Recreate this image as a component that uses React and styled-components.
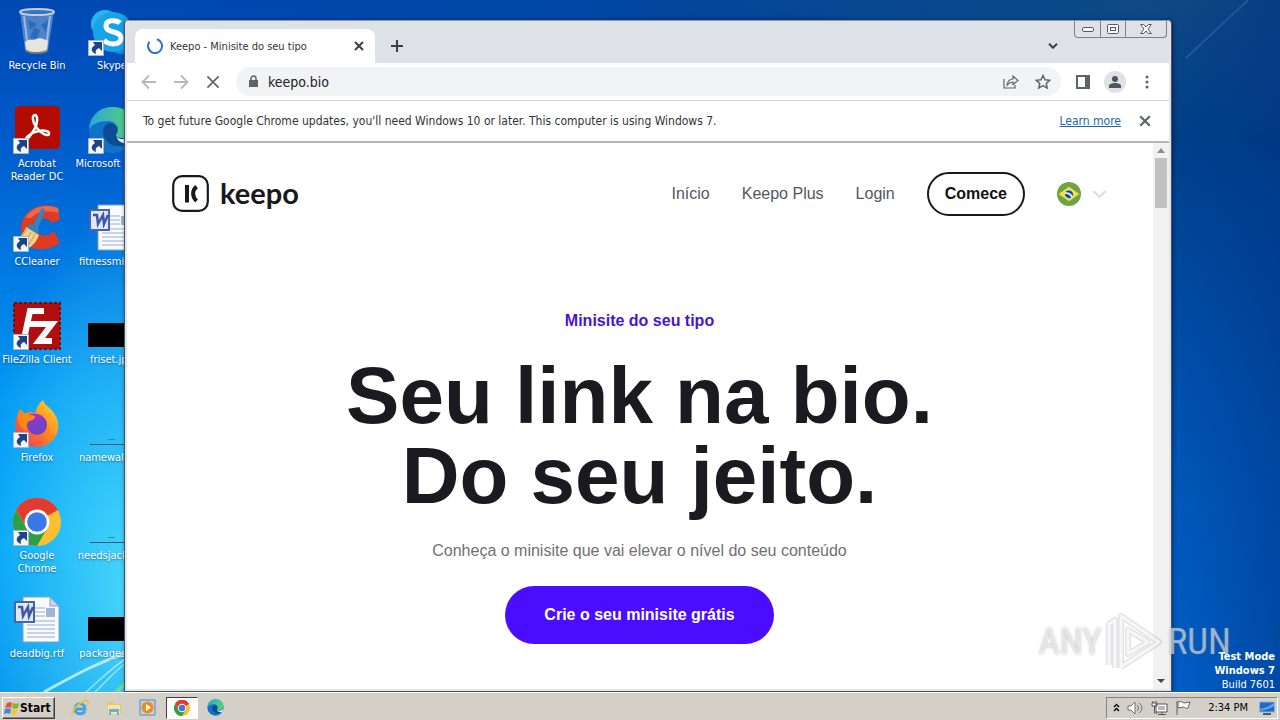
import React from "react";
import styled, { createGlobalStyle, css } from "styled-components";

const ui = `"DejaVu Sans Condensed", "DejaVu Sans", Tahoma, sans-serif`;
const sans = `"Liberation Sans", Arial, sans-serif`;

const GlobalStyle = createGlobalStyle`
  *, *::before, *::after { box-sizing: border-box; }
  body { margin: 0; font-family: ${ui}; font-size: 11px; color: #222; }
  button, input { font: inherit; color: inherit; padding: 0; border: 0; background: none; }
  h1, p, ul { margin: 0; padding: 0; }
  svg { display: block; flex: none; }
`;

const Screen = styled.div`
  display: flex;
  flex-direction: column;
  min-height: 100vh;
`;

const Desktop = styled.main`
  position: relative;
  flex: 1;
  overflow: hidden;
  background:
    radial-gradient(ellipse 160px 380px at 130px 590px, rgba(85, 224, 250, 0.85), rgba(40, 190, 250, 0) 100%),
    linear-gradient(90deg, rgba(0, 64, 140, 0) 10%, rgba(0, 70, 160, 0.9) 50%, rgba(0, 60, 140, 0) 90%),
    linear-gradient(90deg, rgba(0, 56, 140, 0) 90%, rgba(0, 50, 130, 0.5) 100%),
    linear-gradient(180deg, #0048b2 0%, #0058c8 18%, #0078e2 38%, #0098f4 58%, #00a2f8 78%, #0090ee 100%) left / 50% 100% no-repeat,
    linear-gradient(180deg, #0f4a84 0%, #00408a 20%, #004ca4 42%, #005cc0 72%, #0062cc 100%) right / 50% 100% no-repeat;
`;

const Streaks = styled.svg`
  position: absolute;
  bottom: 0;
  left: 0;
`;

const Glint = styled.svg`
  position: absolute;
  top: 0;
  right: 0;
`;

const Shortcuts = styled.ul`
  position: relative;
  display: grid;
  grid-template-columns: 75px 75px;
  grid-auto-rows: 98px;
  width: 150px;
  list-style: none;
`;

const Shortcut = styled.li`
  display: flex;
  flex-direction: column;
  align-items: center;
  gap: 3px;
  width: 74px;
  padding-top: 8px;
  color: #fff;
  line-height: 13px;
  text-align: center;
  text-shadow: 0 1px 2px rgba(0, 20, 60, 0.5);
  white-space: ${(p) => (p.$wrap ? "normal" : "nowrap")};
`;

const Picture = styled.span`
  position: relative;
  width: 48px;
  height: 48px;
`;

const ArrowBadge = styled.svg`
  position: absolute;
  left: 0;
  bottom: 0;
`;

const BrowserWindow = styled.section`
  position: absolute;
  top: 20px;
  right: 108px;
  bottom: 0;
  left: 124px;
  display: flex;
  flex-direction: column;
  padding: 0 2px 2px;
  border: 1px solid #44505c;
  border-top-color: #8e9aa8;
  border-radius: 4px 4px 0 0;
  background: #e3e5e9;
  box-shadow: 1px 0 4px rgba(0, 10, 40, 0.5);
`;

const TitleBar = styled.div`
  display: flex;
  align-items: flex-end;
  height: 42px;
  padding-left: 8px;
  background: #dee1e6;
`;

const Tab = styled.div`
  display: flex;
  align-items: center;
  width: 240px;
  height: 34px;
  margin-right: 5px;
  padding: 0 10px 0 12px;
  gap: 7px;
  border-radius: 8px 8px 0 0;
  background: #fff;
  color: #333;
`;

const TabTitle = styled.span`
  flex: 1;
  white-space: nowrap;
`;

const IconButton = styled.button`
  display: grid;
  place-items: center;
  flex: none;
  width: ${(p) => p.$size || 32}px;
  height: ${(p) => p.$size || 32}px;
  color: ${(p) => p.$tone || "#5f6368"};
`;

const TitleEnd = styled.div`
  display: flex;
  align-items: flex-end;
  align-self: stretch;
  margin-left: auto;
`;

const WindowButtons = styled.div`
  display: flex;
  align-self: flex-start;
  margin: 0 2px 0 4px;
  border: 1px solid #7c828a;
  border-top: 0;
  border-radius: 0 0 4px 4px;
`;

const WindowButton = styled.button`
  display: grid;
  place-items: center;
  width: ${(p) => (p.$wide ? 41 : 25)}px;
  height: 16px;
  & + & { border-left: 1px solid #7c828a; }
`;

const Toolbar = styled.div`
  display: flex;
  align-items: center;
  height: 38px;
  padding: 0 6px;
  border-bottom: 1px solid #d2d3d5;
  background: #fff;
`;

const AddressBar = styled.label`
  display: flex;
  align-items: center;
  flex: 1;
  height: 29px;
  margin: 0 6px 0 7px;
  padding: 0 2px 0 12px;
  border-radius: 15px;
  background: #f1f3f4;
  color: #222;
  font-size: 14px;
  input { flex: 1; min-width: 0; margin-left: 9px; outline: 0; }
`;

const Avatar = styled.span`
  display: grid;
  place-items: center;
  width: 22px;
  height: 22px;
  border-radius: 50%;
  background: #dee1e6;
`;

const InfoBar = styled.div`
  display: flex;
  align-items: center;
  height: 42px;
  padding: 0 8px 0 16px;
  border-bottom: 2px solid #b4b5b7;
  background: #fff;
  color: #333;
  font-size: 12px;
  a { margin-left: auto; margin-right: 8px; color: #1967b8; }
`;

const Viewport = styled.div`
  display: flex;
  flex: 1;
  min-height: 0;
`;

const Page = styled.div`
  flex: 1;
  padding: 29px 46px 0 45px;
  background: #fff;
  font-family: ${sans};
  font-size: 16px;
  line-height: 26px;
`;

const SiteNav = styled.nav`
  display: flex;
  align-items: center;
  gap: 32px;
  height: 44px;
`;

const Brand = styled.a`
  display: flex;
  align-items: center;
  gap: 11px;
  margin-right: auto;
  padding-bottom: 2px;
  color: #18181d;
  font: 700 29px/34px Lato, sans-serif;
  text-decoration: none;
`;

const NavLink = styled.a`
  color: #56565f;
  text-decoration: none;
`;

const Outlined = styled.button`
  height: 44px;
  padding: 0 16px;
  border: 2px solid #18181d;
  border-radius: 22px;
  color: #111;
  font-weight: 700;
`;

const Language = styled.button`
  display: flex;
  align-items: center;
  gap: 11px;
`;

const Hero = styled.div`
  display: flex;
  flex-direction: column;
  align-items: center;
  padding-top: 92px;
  text-align: center;
`;

const Eyebrow = styled.p`
  color: #4515dc;
  font-weight: 700;
`;

const Headline = styled.h1`
  margin: 22px 0;
  color: #1a1a20;
  font-size: 80px;
  line-height: 80px;
`;

const Lead = styled.p`
  color: #707074;
`;

const Primary = styled.button`
  height: 58px;
  margin-top: 22px;
  padding: 0 39px;
  border-radius: 29px;
  background: #4a0dff;
  color: #fff;
  font-weight: 700;
`;

const ScrollTrack = styled.div`
  display: flex;
  flex-direction: column;
  align-items: center;
  width: 16px;
  padding: 5px 0;
  background: #f1f1f1;
`;

const ScrollThumb = styled.div`
  width: 12px;
  height: 50px;
  margin: 5px 0 auto;
  background: #c1c1c1;
`;

const Watermark = styled.div`
  position: absolute;
  right: 49px;
  bottom: 18px;
  display: flex;
  align-items: center;
  gap: 4px;
  color: rgba(255, 255, 255, 0.55);
  font: 400 37px/64px "Liberation Sans Narrow", "Roboto Condensed", sans-serif;
  text-shadow: 0 0 3px rgba(110, 110, 120, 0.5);
  pointer-events: none;
`;

const BuildNote = styled.div`
  position: absolute;
  right: 5px;
  bottom: 0;
  color: #fff;
  line-height: 14px;
  text-align: right;
  strong { display: block; }
`;

const Taskbar = styled.footer`
  display: flex;
  align-items: center;
  height: 28px;
  padding: 2px 2px 0;
  border-top: 1px solid #fff;
  background: #d4d0c8;
  color: #000;
`;

const raised = css`
  border: 1px solid;
  border-color: #fff #404040 #404040 #fff;
  box-shadow: inset -1px -1px #868480;
`;

const StartButton = styled.button`
  ${raised}
  display: flex;
  align-items: center;
  height: 22px;
  margin-right: 9px;
  padding: 0 3px 0 1px;
  font-size: 12px;
  font-weight: 700;
`;

const TaskButton = styled.button`
  display: grid;
  place-items: center;
  width: 32px;
  height: 22px;
  margin-right: 2px;
  border: 1px solid;
  border-color: ${(p) => (p.$active ? "#404040 #fff #fff #404040" : "transparent")};
  background: ${(p) => (p.$active ? "#fff" : "none")};
`;

const Tray = styled.div`
  display: flex;
  align-items: center;
  gap: 7px;
  height: 22px;
  margin-left: auto;
  padding: 0 2px 0 6px;
  border: 1px solid;
  border-color: #868480 #fff #fff #868480;
  time { margin: 0 4px 0 9px; }
`;

/* ---------- drawings ---------- */

const Cross = ({ size = 10, width = 2 }) => (
  <svg width={size} height={size} viewBox="0 0 10 10" stroke="currentColor" strokeWidth={width} fill="none">
    <path d="M1 1l8 8M9 1l-8 8" />
  </svg>
);

const Chevron = ({ width = 10, stroke = "#3c4043", line = 2 }) => (
  <svg width={width} height={width * 0.6} viewBox="0 0 10 6" stroke={stroke} strokeWidth={line} fill="none">
    <path d="M1 .7l4 4 4-4" />
  </svg>
);

const Arrow = ({ flip }) => (
  <svg width="16" height="16" viewBox="0 0 16 16" fill="none" stroke="#b6b8bb" strokeWidth="1.800">
    <path d={flip ? "M1 8h13M8 1.500L14.500 8 8 14.500" : "M15 8H2M8 1.500L1.500 8 8 14.500"} />
  </svg>
);

const ChromeMark = ({ size }) => (
  <svg width={size} height={size} viewBox="0 0 48 48">
    <circle cx="24" cy="24" r="24" fill="#fbc02d" />
    <path d="M24 24L3.2 12A24 24 0 0 1 44.8 12z" fill="#e33b2e" />
    <path d="M24 12h20.8A24 24 0 0 0 3.2 12L14 30z" fill="#e33b2e" />
    <path d="M3.2 12A24 24 0 0 0 24 48l10.4-18L24 34l-10.4-4z" fill="#2f9e48" />
    <circle cx="24" cy="24" r="12.4" fill="#fff" />
    <circle cx="24" cy="24" r="9.8" fill="#3b78e7" />
  </svg>
);

const EdgeMark = ({ size }) => (
  <svg width={size} height={size} viewBox="0 0 48 48">
    <defs>
      <linearGradient id="edgeTop" x1="0" x2="1">
        <stop offset="0" stopColor="#2aa7dd" />
        <stop offset="1" stopColor="#5ad36b" />
      </linearGradient>
    </defs>
    <circle cx="24" cy="24" r="23" fill="#1173c8" />
    <path d="M1 24C2 9 12 1 25 1c14 0 22 10 22 19 0 8-6 12-13 12-5 0-7-2-5-5 3-5-1-12-9-12C10 15 2 19 1 24z" fill="url(#edgeTop)" />
    <path d="M15 27c0-6 3-9 6-10 6 0 10 5 8 10-2 3 0 5 5 5 5 1 9 0 11-2l1 4-8 5c-11 4-22-2-23-12z" fill="#0c4a94" />
    <path d="M29 27c-2 4 1 6 6 6 6 0 10-2 12-6-1 6-3 9-5 11-9 0-15-4-13-11z" fill="#e9f6fb" />
  </svg>
);

const RecycleBin = () => (
  <svg width="48" height="48" viewBox="0 0 48 48">
    <path d="M7 4l5 38c0 5 23 5 23 0l6-38z" fill="#7ea6d8" fillOpacity=".6" />
    <path d="M11 8l4 32M37 8l-4 32" stroke="#dce9f8" strokeOpacity=".55" strokeWidth="2" />
    <path d="M17 30l4-11 6 3-3 9zM28 17l7-5-2 12zM15 12l9 4-7 6z" fill="#225fae" opacity=".7" />
    <path d="M12 34c4-4 8-1 11-3 5-2 8 0 12 2l-1 9c-4 4-17 4-21 0z" fill="#e6e4dc" />
    <path d="M13 42c3 4 18 4 22 0" stroke="#777" strokeWidth="2" fill="none" />
    <ellipse cx="24" cy="4" rx="17" ry="3" fill="#3474bd" stroke="#c3cbd4" strokeWidth="2" />
  </svg>
);

const Skype = () => (
  <svg width="48" height="48" viewBox="0 0 48 48">
    <circle cx="17" cy="16" r="14" fill="#28b4ee" />
    <circle cx="33" cy="33" r="13" fill="#0d8bd8" />
    <circle cx="25" cy="24" r="20" fill="#16a3e8" />
    <path d="M32 15c-3-3-14-4-14 3 0 8 15 4 15 12 0 8-13 7-17 2" stroke="#fff" strokeWidth="5" fill="none" />
  </svg>
);

const Acrobat = () => (
  <svg width="48" height="48" viewBox="0 0 48 48">
    <rect x="2" y="0" width="45" height="43" rx="5" fill="#b30b00" />
    <path d="M12 34c3-6 9-8 14-9s11 0 10 3-9-1-13-7-4-12-1-12 3 9-1 15-7 11-9 10z" fill="none" stroke="#fff" strokeWidth="2.500" />
  </svg>
);

const CCleaner = () => (
  <svg width="48" height="48" viewBox="0 0 48 48">
    <path d="M45 4C28-4 8 7 8 25c0 19 20 27 39 14l-6-12c-5 6-16 7-18-3-1-10 11-13 16-5l8-3z" fill="#dd3b22" />
    <path d="M12 14c8-13 23-14 33-10l1 5c-10-3-20-3-28 5z" fill="#f5876a" opacity=".6" />
    <path d="M29 4l3 1-7 20-6-3z" fill="#2c86c8" />
    <path d="M16 20l10 5-1 6-12-7z" fill="#3b7fb8" />
    <path d="M13 23l13 8c-2 6-6 11-12 14L2 36c5-3 9-7 11-13z" fill="#f1cf8c" />
    <path d="M14 25L5 37M18 28l-8 13M22 30l-8 14" stroke="#c89b50" strokeWidth="1" />
  </svg>
);

const WordDoc = () => (
  <svg width="48" height="48" viewBox="0 0 48 48">
    <path d="M10 1h27l9 9v36H10z" fill="#f8fbff" stroke="#8a9cc0" />
    <path d="M37 1l9 9h-9z" fill="#c9d5ea" stroke="#8a9cc0" />
    <path d="M22 12h10M22 16h10M22 20h10M14 25h28M14 29h28M14 33h28M14 37h28M14 41h28" stroke="#98abd0" />
    <rect x="33" y="12" width="9" height="9" fill="#9db4dc" />
    <rect x="2" y="6" width="19" height="20" fill="#dfe8f8" stroke="#4a62a6" strokeWidth="2" />
    <path d="M5 11h4l1 9 5-9 1 9 4-9" fill="none" stroke="#3d57a3" strokeWidth="2.500" />
  </svg>
);

const FileZilla = () => (
  <svg width="48" height="48" viewBox="0 0 48 48">
    <rect x="1" y="1" width="46" height="46" fill="#b30d0d" stroke="#7d0a0a" strokeWidth="2" strokeDasharray="3 2" />
    <path d="M31 9H17l-6 28M14 22h12M26 22h13L26 39h13" fill="none" stroke="#fff" strokeWidth="6" />
  </svg>
);

const Firefox = () => (
  <svg width="48" height="48" viewBox="0 0 48 48">
    <defs>
      <linearGradient id="fox" x1="1" y1="0" x2="0" y2="1">
        <stop offset="0" stopColor="#ffe13a" />
        <stop offset=".45" stopColor="#ff8b1c" />
        <stop offset="1" stopColor="#f0285f" />
      </linearGradient>
    </defs>
    <path d="M30 0c2 6 7 7 11 13 11 16-1 34-17 34C8 47-2 32 4 16l3-7 5 5c4-3 7-2 10-1 2-6 4-10 8-13z" fill="url(#fox)" />
    <circle cx="24" cy="25" r="10" fill="#7442c9" />
    <path d="M17 14c8-2 15 2 17 9-4-4-6-4-9-3-3 3-8 1-12 3 0-4 0-6 4-9z" fill="#a130c8" />
    <path d="M6 12c5 1 9 2 16 4 1 4-6 4-8 7s1 8 1 8C6 28 4 20 6 12z" fill="#ff8a16" />
  </svg>
);

const BlackThumb = () => (
  <svg width="48" height="48" viewBox="0 0 48 48">
    <rect y="21" width="48" height="24" />
  </svg>
);

const ThinThumb = () => (
  <svg width="48" height="48" viewBox="0 0 48 48">
    <path d="M2 44.500h46" stroke="#1d5f80" />
    <path d="M20 39.500h7" stroke="#2b8cb4" />
  </svg>
);

const WindowsFlag = () => (
  <svg width="16" height="16" viewBox="0 0 16 16">
    <path d="M3 3c2-1 4-1 5 0L7 8C5 7 4 7 1 8z" fill="#e8502e" />
    <path d="M9 3c2 1 4 1 6 0l-1 5c-2 1-4 1-6 0z" fill="#7db928" />
    <path d="M1 9c2-1 4-1 6 0l-1 5c-2-1-4-1-6 0z" fill="#3a8ad8" />
    <path d="M8 9c2 1 4 1 6 0l-2 5c-1 1-3 1-5 0z" fill="#fbc32a" />
  </svg>
);

const shortcuts = [
  { name: "Recycle Bin", art: <RecycleBin /> },
  { name: "Skype", art: <Skype />, badge: true },
  { name: "Acrobat Reader DC", art: <Acrobat />, badge: true, wrap: true },
  { name: "Microsoft Edge", art: <EdgeMark size={48} />, badge: true },
  { name: "CCleaner", art: <CCleaner />, badge: true },
  { name: "fitnessmin.rtf", art: <WordDoc /> },
  { name: "FileZilla Client", art: <FileZilla />, badge: true },
  { name: "friset.jpg", art: <BlackThumb /> },
  { name: "Firefox", art: <Firefox />, badge: true },
  { name: "namewall.jpg", art: <ThinThumb /> },
  { name: "Google Chrome", art: <ChromeMark size={48} />, badge: true, wrap: true },
  { name: "needsjack.jpg", art: <ThinThumb /> },
  { name: "deadbig.rtf", art: <WordDoc /> },
  { name: "packages.jpg", art: <BlackThumb /> },
];

function DesktopIcons() {
  return (
    <Shortcuts>
      {shortcuts.map(({ name, art, badge, wrap }) => (
        <Shortcut key={name} $wrap={wrap}>
          <Picture>
            {art}
            {badge && (
              <ArrowBadge width="16" height="16" viewBox="0 0 16 16">
                <path d="M.5.5h15v15H.5z" fill="#f4f6f8" stroke="#a9b4c0" />
                <path d="M5 2h9v9l-3-3c-3 1-4 3-3 6-5-2-6-6-1-9z" fill="#1c4489" />
              </ArrowBadge>
            )}
          </Picture>
          {name}
        </Shortcut>
      ))}
    </Shortcuts>
  );
}

function BrowserChrome() {
  return (
    <>
      <TitleBar>
        <Tab>
          <svg width="16" height="16" viewBox="0 0 16 16" fill="none" stroke="#2f6fdb" strokeWidth="2">
            <path d="M10 1.300A7 7 0 1 1 2.500 3.700" />
          </svg>
          <TabTitle>Keepo - Minisite do seu tipo</TabTitle>
          <IconButton $size={12} $tone="#3c4043" aria-label="Close tab"><Cross /></IconButton>
        </Tab>
        <IconButton $size={34} $tone="#3c4043" aria-label="New tab">
          <svg width="12" height="12" viewBox="0 0 12 12" stroke="currentColor" strokeWidth="2"><path d="M6 0v12M0 6h12" /></svg>
        </IconButton>
        <TitleEnd>
          <IconButton $size={34} aria-label="Search tabs"><Chevron /></IconButton>
          <WindowButtons>
            <WindowButton aria-label="Minimize">
              <svg width="12" height="5" viewBox="0 0 12 5"><rect x=".5" y=".5" width="11" height="4" rx="1.500" fill="#fff" stroke="#555b66" /></svg>
            </WindowButton>
            <WindowButton aria-label="Maximize">
              <svg width="12" height="10" viewBox="0 0 12 10" fill="#fff" stroke="#555b66"><rect x=".5" y=".5" width="11" height="9" rx="1" /><rect x="3.500" y="3.500" width="5" height="3" /></svg>
            </WindowButton>
            <WindowButton $wide aria-label="Close">
              <svg width="12" height="10" viewBox="0 0 12 10" fill="#fff" stroke="#555b66">
                <path d="M.7.500h3L6 3 8.300.500h3L8 5l3.300 4.500h-3L6 7 3.700 9.500h-3L4 5z" />
              </svg>
            </WindowButton>
          </WindowButtons>
        </TitleEnd>
      </TitleBar>
      <Toolbar>
        <IconButton aria-label="Back"><Arrow /></IconButton>
        <IconButton aria-label="Forward"><Arrow flip /></IconButton>
        <IconButton aria-label="Stop"><Cross size={14} width={1.2} /></IconButton>
        <AddressBar>
          <svg width="11" height="13" viewBox="0 0 11 13">
            <path d="M1 5h9v7H1z" fill="#5f6368" />
            <path d="M3 5V3.500a2.500 2.500 0 0 1 5 0V5" fill="none" stroke="#5f6368" strokeWidth="1.500" />
          </svg>
          <input aria-label="Address" defaultValue="keepo.bio" />
          <IconButton aria-label="Share">
            <svg width="16" height="14" viewBox="0 0 16 14" fill="none" stroke="#5f6368" strokeWidth="1.200">
              <path d="M1 4v9h11v-3M4 10c1-5 3-6 6-6V1l5 4.500-5 4V7c-3 0-4 1-6 3z" />
            </svg>
          </IconButton>
          <IconButton aria-label="Bookmark">
            <svg width="16" height="16" viewBox="0 0 16 16" fill="none" stroke="#5f6368" strokeWidth="1.500">
              <path d="M8 1.500l2 4.300 4.700.5-3.500 3.100 1 4.700L8 11.700l-4.200 2.400 1-4.700L1.300 6.300 6 5.800z" />
            </svg>
          </IconButton>
        </AddressBar>
        <IconButton aria-label="Side panel">
          <svg width="14" height="14" viewBox="0 0 14 14"><path d="M1 1h12v12H1z" fill="#fff" stroke="#5f6368" strokeWidth="2" /><path d="M9 0h5v14H9z" fill="#5f6368" /></svg>
        </IconButton>
        <IconButton aria-label="Profile">
          <Avatar>
            <svg width="14" height="14" viewBox="0 0 14 14" fill="#51555b"><circle cx="7" cy="4" r="3" /><path d="M1 13v-2c0-4 12-4 12 0v2z" /></svg>
          </Avatar>
        </IconButton>
        <IconButton aria-label="Menu">
          <svg width="4" height="14" viewBox="0 0 4 14" fill="#5f6368"><circle cx="2" cy="2" r="1.500" /><circle cx="2" cy="7" r="1.500" /><circle cx="2" cy="12" r="1.500" /></svg>
        </IconButton>
      </Toolbar>
      <InfoBar>
        <span>To get future Google Chrome updates, you'll need Windows 10 or later. This computer is using Windows 7.</span>
        <a href="#learn">Learn more</a>
        <IconButton aria-label="Dismiss"><Cross size={12} width={1.800} /></IconButton>
      </InfoBar>
    </>
  );
}

function KeepoPage() {
  return (
    <Page>
      <SiteNav>
        <Brand href="#home">
          <svg width="37" height="37" viewBox="0 0 37 37">
            <rect x="1.200" y="1.200" width="34.600" height="34.600" rx="9" fill="none" stroke="#18181d" strokeWidth="2.200" />
            <path d="M13 10h4v17.500h-4z" fill="#18181d" />
            <path d="M24.500 11.500c-4.500 4-4.500 10 0 14.500" fill="none" stroke="#18181d" strokeWidth="4" />
          </svg>
          keepo
        </Brand>
        <NavLink href="#inicio">Início</NavLink>
        <NavLink href="#plus">Keepo Plus</NavLink>
        <NavLink href="#login">Login</NavLink>
        <Outlined>Comece</Outlined>
        <Language aria-label="Idioma">
          <svg width="24" height="24" viewBox="0 0 24 24">
            <circle cx="12" cy="12" r="12" fill="#6da544" />
            <path d="M12 4.700L22.400 12 12 19.300 1.600 12z" fill="#ffda44" />
            <circle cx="12" cy="12" r="4.200" fill="#f0f0f0" />
            <path d="M8.200 10.300c3-.5 6 .6 7.400 3.900A4.200 4.200 0 0 0 8.200 10.300zM7.800 12c2.500-.4 5 .5 6.500 3.400A4.200 4.200 0 0 1 7.800 12z" fill="#0052b4" />
          </svg>
          <Chevron width={15} stroke="#dcdce0" line={1.3} />
        </Language>
      </SiteNav>
      <Hero>
        <Eyebrow>Minisite do seu tipo</Eyebrow>
        <Headline>Seu link na bio.<br />Do seu jeito.</Headline>
        <Lead>Conheça o minisite que vai elevar o nível do seu conteúdo</Lead>
        <Primary>Crie o seu minisite grátis</Primary>
      </Hero>
    </Page>
  );
}

export default function App() {
  return (
    <Screen>
      <GlobalStyle />
      <Desktop>
        <Streaks width="190" height="60" viewBox="0 0 190 60" fill="none" stroke="#d8fbff">
          <path d="M44 60C70 46 95 31 130 20" strokeWidth="3" opacity=".75" />
          <path d="M86 60c14-12 26-25 44-36M95 60c11-10 20-22 35-32" strokeWidth="1.500" opacity=".6" />
          <path d="M116 60l10-9" stroke="#7be08a" strokeWidth="4" opacity=".8" />
        </Streaks>
        <Glint width="108" height="70" viewBox="0 0 108 70">
          <path d="M76 0L14 58" stroke="#78aee0" strokeWidth="2" opacity=".2" />
        </Glint>
        <DesktopIcons />
        <BrowserWindow>
          <BrowserChrome />
          <Viewport>
            <KeepoPage />
            <ScrollTrack>
              <svg width="8" height="5" viewBox="0 0 8 5" fill="#8e8e8e"><path d="M0 5l4-5 4 5z" /></svg>
              <ScrollThumb />
              <svg width="8" height="5" viewBox="0 0 8 5" fill="#444"><path d="M0 0l4 4 4-4z" /></svg>
            </ScrollTrack>
          </Viewport>
        </BrowserWindow>
        <Watermark>
          ANY
          <svg width="58" height="64" viewBox="0 0 58 64" fill="none" strokeLinejoin="round">
            <path d="M3 55V14l6-4v48M15 58V6l38 26-38 25M22 43V20l20 12-20 12z" stroke="#909098" strokeOpacity=".25" strokeWidth="6" />
            <path d="M3 55V14l6-4v48M15 58V6l38 26-38 25M22 43V20l20 12-20 12z" stroke="#fff" strokeOpacity=".7" strokeWidth="3" />
          </svg>
          RUN
        </Watermark>
        <BuildNote>
          <strong>Test Mode</strong>
          <strong>Windows 7</strong>
          Build 7601
        </BuildNote>
      </Desktop>
      <Taskbar>
        <StartButton><WindowsFlag />Start</StartButton>
        <TaskButton aria-label="Internet Explorer">
          <svg width="18" height="18" viewBox="0 0 18 18" fill="none">
            <path d="M4 10h10c0-7-10-7-10 0 0 6 8 6 10 2" stroke="#42a5e0" strokeWidth="3" />
            <path d="M1 16C0 11 12 0 17 2c1 1 0 3-1 4" stroke="#e9c34a" strokeWidth="1.800" />
          </svg>
        </TaskButton>
        <TaskButton aria-label="Explorer">
          <svg width="18" height="18" viewBox="0 0 18 18">
            <path d="M2 3h6l1 2h7v10H2z" fill="#e9c765" /><path d="M3 6h12v9H3z" fill="#f8e6a0" /><path d="M4 10h10v6h-2v-3H6v3H4z" fill="#69aedc" />
          </svg>
        </TaskButton>
        <TaskButton aria-label="Media Player">
          <svg width="17" height="17" viewBox="0 0 17 17">
            <path d="M1 1h15v15H1z" fill="#b8d4ee" stroke="#5586b8" /><circle cx="8.500" cy="8.500" r="6" fill="#f28a1a" /><path d="M7 5l5 3.500L7 12z" fill="#fff" />
          </svg>
        </TaskButton>
        <TaskButton $active aria-label="Chrome"><ChromeMark size={16} /></TaskButton>
        <TaskButton aria-label="Edge"><EdgeMark size={17} /></TaskButton>
        <Tray>
          <svg width="7" height="9" viewBox="0 0 7 9" fill="none" stroke="#000" strokeWidth="1.400"><path d="M1 4l2.500-2.500L6 4M1 8l2.500-2.500L6 8" /></svg>
          <svg width="17" height="16" viewBox="0 0 17 16" fill="#fff" stroke="#707070"><path d="M1 6h3l4-4v12l-4-4H1z" /><path d="M10 5c2 2 2 4 0 6M12 3c4 3 4 7 0 10" fill="none" /></svg>
          <svg width="17" height="16" viewBox="0 0 17 16" fill="#fff" stroke="#555"><path d="M5 4h11v8H5zM7 14.500h8M11 12v2M1 3h5v3H1zM3.500 6v7h3M2 1v2M5 1v2" /><path d="M7 6h7v4H7z" fill="#b8b8b8" stroke="none" /></svg>
          <svg width="17" height="16" viewBox="0 0 17 16" fill="#fff" stroke="#606060"><path d="M2 1v14M3 2c3-1 4 0 6 1l6-1-2 6c-2 1-3-1-5-1l-5 1z" /></svg>
          <time>2:34 PM</time>
          <svg width="16" height="14" viewBox="0 0 16 14"><path d="M.5 1h15v10H.5z" fill="#2468c4" stroke="#8eb0dc" /><path d="M1 8c5-1 9-3 14-6v3c-4 3-9 4-14 5z" fill="#58a6ec" /><path d="M4 12h8v2H4z" fill="#4a5c74" /></svg>
        </Tray>
      </Taskbar>
    </Screen>
  );
}
